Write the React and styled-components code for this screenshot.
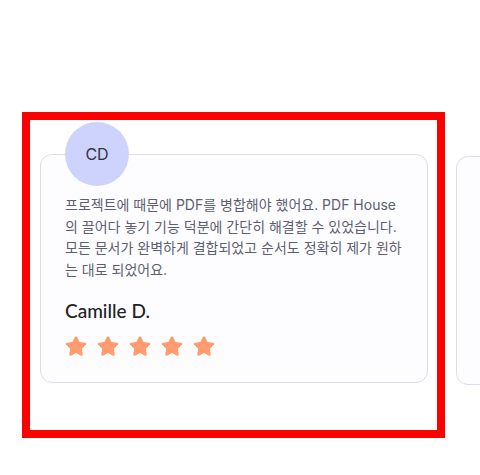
import React from 'react';
import styled, { createGlobalStyle } from 'styled-components';
import { FaStar } from 'react-icons/fa';

const GlobalStyle = createGlobalStyle`
  html, body {
    margin: 0;
    padding: 0;
    background: #ffffff;
    overflow: hidden;
  }
  body {
    font-family: Inter, "Noto Sans CJK KR", sans-serif;
  }
`;

const Section = styled.section`
  width: 480px;
  height: 475px;
  overflow: hidden;
  padding-top: 112px;
  box-sizing: border-box;
`;

const Track = styled.div`
  display: flex;
  align-items: flex-start;
  gap: 28px;
  padding-left: 22px;
`;

// 강조 표시된 슬라이드 (빨간 테두리)
const Highlight = styled.div`
  flex: none;
  border: 8px solid #ff0000;
  padding: 2px 9px 47px 10px;
  margin-right: -17px;
`;

const Slide = styled.div`
  flex: none;
  padding-top: ${(p) => p.$top || 0}px;
`;

const Card = styled.div`
  position: relative;
  width: 388px;
  min-height: 229px;
  box-sizing: border-box;
  margin-top: 32px;
  padding: 39px 24px 25px 24px;
  border: 1px solid #dddbec;
  border-radius: 12px;
  background: #fdfdff;
`;

const Avatar = styled.div`
  position: absolute;
  top: -33px;
  left: 24px;
  width: 64px;
  height: 64px;
  border-radius: 50%;
  background: #cdd3fc;
  display: flex;
  align-items: center;
  justify-content: center;
  font-family: Inter, "Liberation Sans", sans-serif;
  font-size: 16px;
  color: #34343f;
`;

const Quote = styled.p`
  margin: 0;
  font-family: Inter, "Noto Sans CJK KR", sans-serif;
  font-size: 14px;
  line-height: 21.6px;
  color: #5e5e72;
  white-space: nowrap;
`;

const Name = styled.div`
  margin-top: 19px;
  font-family: Lato, "Open Sans", sans-serif;
  font-weight: 500;
  font-size: 19px;
  line-height: 23px;
  color: #222226;
`;

const Stars = styled.div`
  display: flex;
  gap: 10px;
  margin-top: 13px;
  color: #ff9b6e;
`;

const reviews = [
  {
    initials: 'CD',
    // 원본과 같은 줄바꿈 위치
    lines: [
      '프로젝트에 때문에 PDF를 병합해야 했어요. PDF House',
      '의 끌어다 놓기 기능 덕분에 간단히 해결할 수 있었습니다.',
      '모든 문서가 완벽하게 결합되었고 순서도 정확히 제가 원하',
      '는 대로 되었어요.',
    ],
    name: 'Camille D.',
    rating: 5,
  },
];

const ReviewCard = ({ review }) => (
  <Card>
    {review && <Avatar>{review.initials}</Avatar>}
    {review && (
      <>
        <Quote>
          {review.lines.map((line, i) => (
            <React.Fragment key={i}>
              {line}
              {i < review.lines.length - 1 && <br />}
            </React.Fragment>
          ))}
        </Quote>
        <Name>{review.name}</Name>
        <Stars>
          {Array.from({ length: review.rating }).map((_, i) => (
            <FaStar key={i} size={22} />
          ))}
        </Stars>
      </>
    )}
  </Card>
);

export default function App() {
  return (
    <>
      <GlobalStyle />
      <Section>
        <Track>
          <Highlight>
            <ReviewCard review={reviews[0]} />
          </Highlight>
          <Slide $top={12}>
            <ReviewCard />
          </Slide>
        </Track>
      </Section>
    </>
  );
}
